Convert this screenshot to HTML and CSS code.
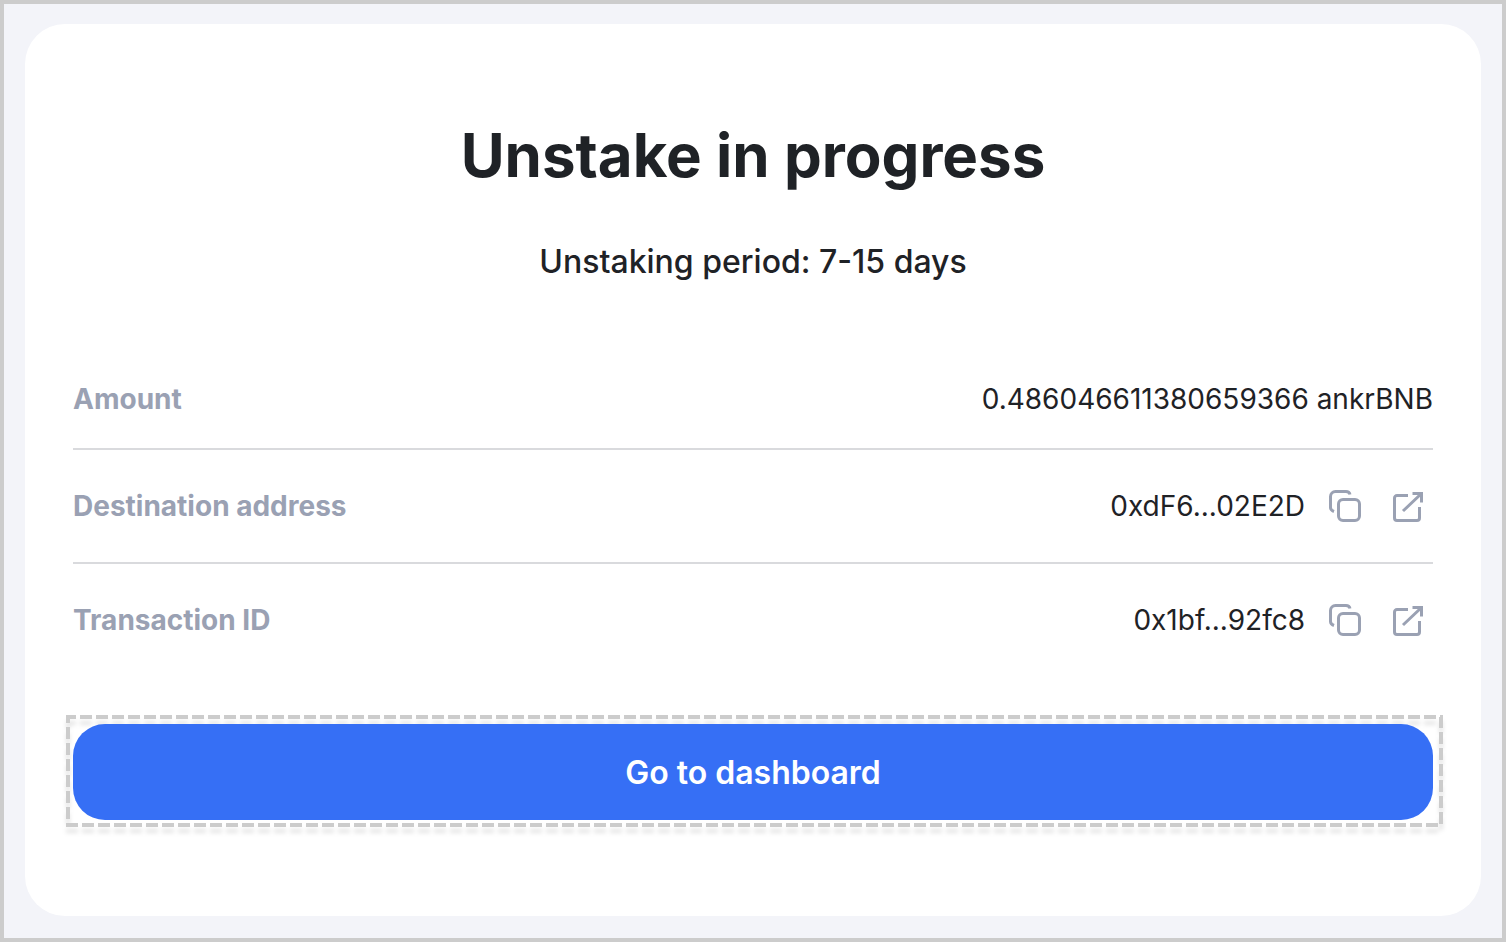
FILE: index.html
```html
<!DOCTYPE html>
<html lang="en">
<head>
    <meta charset="UTF-8">
    <meta name="viewport" content="width=device-width, initial-scale=1.0">
    <title>Unstake in progress</title>
    <link rel="stylesheet" href="styles.css">
</head>
<body>
    <svg class="sprite" aria-hidden="true">
        <symbol id="copy" viewBox="0 0 32 32">
            <rect x="9.5" y="9.5" width="21" height="21" rx="4.5"/>
            <path d="M5 21.5 C2.500 20.500 1.500 19.500 1.500 17.500 V6.500 A5 5 0 0 1 6.500 1.500 H17 C19 1.500 20.500 2.500 21 4.500"/>
        </symbol>
        <symbol id="open" viewBox="0 0 32 32">
            <path d="M15 5.500 H4 A2.500 2.500 0 0 0 1.500 8 V28 A2.500 2.500 0 0 0 4 30.500 H24 A2.500 2.500 0 0 0 26.500 28 V17"/>
            <path d="M19.500 3.500 H28.500 V12.500 M28.500 3.500 L10 21"/>
        </symbol>
    </svg>

    <main class="card">
        <h1>Unstake in progress</h1>
        <p class="period">Unstaking period: 7-15 days</p>

        <dl class="details">
            <div class="row">
                <dt>Amount</dt>
                <dd>0.486046611380659366 ankrBNB</dd>
            </div>
            <div class="row">
                <dt>Destination address</dt>
                <dd>
                    <span>0xdF6...02E2D</span>
                    <button class="icon" aria-label="Copy address"><svg><use href="#copy"/></svg></button>
                    <a class="icon" href="#" aria-label="Open address"><svg><use href="#open"/></svg></a>
                </dd>
            </div>
            <div class="row">
                <dt>Transaction ID</dt>
                <dd>
                    <span>0x1bf...92fc8</span>
                    <button class="icon" aria-label="Copy transaction ID"><svg><use href="#copy"/></svg></button>
                    <a class="icon" href="#" aria-label="Open transaction"><svg><use href="#open"/></svg></a>
                </dd>
            </div>
        </dl>

        <div class="highlight">
            <svg class="frame" aria-hidden="true"><rect x="2" y="2"/></svg>
            <button class="dashboard">Go to dashboard</button>
        </div>
    </main>
</body>
</html>
```
FILE: styles.css
```css
* {
    box-sizing: border-box;
}
body {
    margin: 0;
    min-height: 100vh;
    padding: 20px 21px 22px;
    border: 4px solid #cccccc;
    background-color: #f3f4f9;
    color: #1f2226;
    font-family: Inter, sans-serif;
}
.sprite {
    display: none;
}
.card {
    padding: 96px 48px 89px;
    border-radius: 40px;
    background-color: #ffffff;
}
h1 {
    margin: 0;
    font-size: 60px;
    line-height: 70px;
    font-weight: 700;
    text-align: center;
}
.period {
    margin: 50px 0 0;
    font-size: 32px;
    line-height: 44px;
    font-weight: 500;
    text-align: center;
}
.details {
    margin: 66px 0 0;
}
.row {
    display: flex;
    align-items: center;
    justify-content: space-between;
    height: 114px;
    border-bottom: 2px solid #d9dadd;
    font-size: 28px;
    line-height: 40px;
}
.row:first-child {
    height: 100px;
}
.row:last-child {
    height: 112px;
    border-bottom: none;
}
dt {
    color: #9aa1b3;
    font-weight: 700;
}
dd {
    display: flex;
    align-items: center;
    margin: 0;
}
.icon {
    display: flex;
    margin-left: 24px;
    padding: 0;
    border: none;
    background: none;
    cursor: pointer;
}
a.icon {
    margin: 0 8px 0 32px;
}
.icon svg {
    width: 32px;
    height: 32px;
    fill: none;
    stroke: #9aa1b3;
    stroke-width: 3;
}
/* Dashed frame around the main action */
.highlight {
    position: relative;
    margin: 39px -10px 0 -7px;
    padding: 9px 10px 7px 7px;
}
.frame {
    position: absolute;
    inset: 0;
    width: 100%;
    height: 100%;
    overflow: visible;
    pointer-events: none;
    filter: drop-shadow(0 6px 2px rgba(0, 0, 0, 0.1));
}
.frame rect {
    width: calc(100% - 4px);
    height: calc(100% - 4px);
    fill: none;
    stroke: #cccccc;
    stroke-width: 4;
    stroke-dasharray: 12 4;
    stroke-dashoffset: 4;
}
.dashboard {
    position: relative;
    display: block;
    width: 100%;
    height: 96px;
    border: none;
    border-radius: 32px;
    background-color: #366ff5;
    color: #ffffff;
    font-family: inherit;
    font-size: 32px;
    font-weight: 600;
    cursor: pointer;
}
```
